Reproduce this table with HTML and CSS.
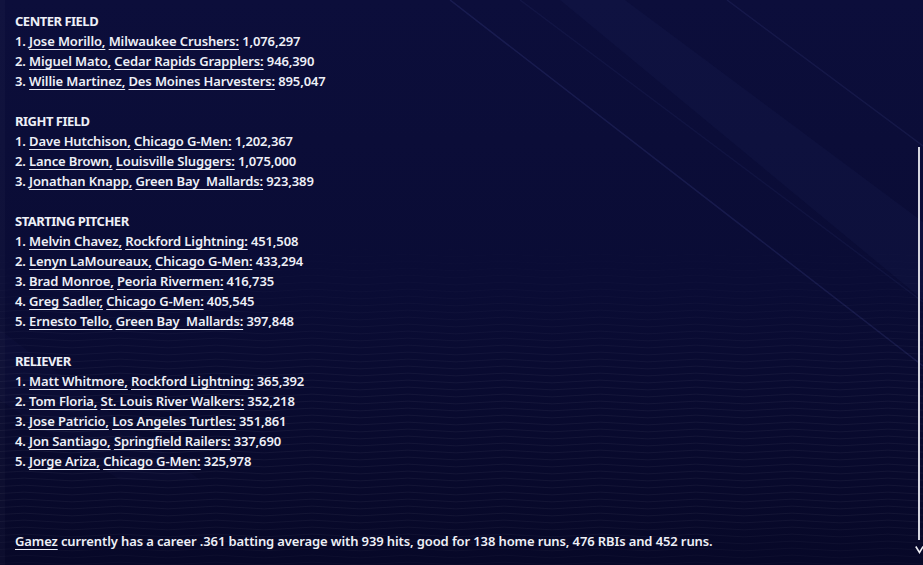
FILE: index.html
```html
<!DOCTYPE html>
<html lang="en">
<head>
<meta charset="utf-8">
<title>Awards voting</title>
<link rel="stylesheet" href="styles.css">
</head>
<body>
<div class="screen">
  <svg class="backdrop" width="923" height="565" viewBox="0 0 923 565" aria-hidden="true">
    <defs>
      <pattern id="wave" width="96" height="7" patternUnits="userSpaceOnUse">
        <path d="M0 3.5 Q24 0.8 48 3.5 T96 3.5" fill="none" stroke="#ffffff" stroke-width="1"/>
      </pattern>
      <linearGradient id="waveFade" x1="0" y1="0" x2="0" y2="1">
        <stop offset="0" stop-color="#fff" stop-opacity="0"/>
        <stop offset="0.45" stop-color="#fff" stop-opacity="1"/>
        <stop offset="0.85" stop-color="#fff" stop-opacity="1"/>
        <stop offset="1" stop-color="#fff" stop-opacity="0.4"/>
      </linearGradient>
      <mask id="waveMask">
        <rect x="0" y="235" width="923" height="330" fill="url(#waveFade)"/>
      </mask>
    </defs>
    <polygon points="560,0 625,0 923,222 923,300" fill="#8c96ff" fill-opacity="0.03"/>
    <line x1="450" y1="0" x2="923" y2="366" stroke="#8c96ff" stroke-opacity="0.11" stroke-width="1.5"/>
    <line x1="520" y1="0" x2="923" y2="302" stroke="#8c96ff" stroke-opacity="0.05" stroke-width="1.5"/>
    <line x1="727" y1="0" x2="923" y2="146" stroke="#8c96ff" stroke-opacity="0.08" stroke-width="1.5"/>
    <polygon points="0,330 0,400 120,480 200,480" fill="#8c96ff" fill-opacity="0.02"/>
    <rect x="0" y="235" width="923" height="330" fill="url(#wave)" opacity="0.045" mask="url(#waveMask)"/>
  </svg>

  <main class="content">
    <section class="group">
      <h3 class="group-title">CENTER FIELD</h3>
      <ol class="rank-list">
        <li>1. <a href="#">Jose Morillo,</a> <a href="#">Milwaukee Crushers:</a> 1,076,297</li>
        <li>2. <a href="#">Miguel Mato,</a> <a href="#">Cedar Rapids Grapplers:</a> 946,390</li>
        <li>3. <a href="#">Willie Martinez,</a> <a href="#">Des Moines Harvesters:</a> 895,047</li>
      </ol>
    </section>

    <section class="group">
      <h3 class="group-title">RIGHT FIELD</h3>
      <ol class="rank-list">
        <li>1. <a href="#">Dave Hutchison,</a> <a href="#">Chicago G-Men:</a> 1,202,367</li>
        <li>2. <a href="#">Lance Brown,</a> <a href="#">Louisville Sluggers:</a> 1,075,000</li>
        <li>3. <a href="#">Jonathan Knapp,</a> <a href="#">Green Bay&nbsp; Mallards:</a> 923,389</li>
      </ol>
    </section>

    <section class="group">
      <h3 class="group-title">STARTING PITCHER</h3>
      <ol class="rank-list">
        <li>1. <a href="#">Melvin Chavez,</a> <a href="#">Rockford Lightning:</a> 451,508</li>
        <li>2. <a href="#">Lenyn LaMoureaux,</a> <a href="#">Chicago G-Men:</a> 433,294</li>
        <li>3. <a href="#">Brad Monroe,</a> <a href="#">Peoria Rivermen:</a> 416,735</li>
        <li>4. <a href="#">Greg Sadler,</a> <a href="#">Chicago G-Men:</a> 405,545</li>
        <li>5. <a href="#">Ernesto Tello,</a> <a href="#">Green Bay&nbsp; Mallards:</a> 397,848</li>
      </ol>
    </section>

    <section class="group group-last">
      <h3 class="group-title">RELIEVER</h3>
      <ol class="rank-list">
        <li>1. <a href="#">Matt Whitmore,</a> <a href="#">Rockford Lightning:</a> 365,392</li>
        <li>2. <a href="#">Tom Floria,</a> <a href="#">St. Louis River Walkers:</a> 352,218</li>
        <li>3. <a href="#">Jose Patricio,</a> <a href="#">Los Angeles Turtles:</a> 351,861</li>
        <li>4. <a href="#">Jon Santiago,</a> <a href="#">Springfield Railers:</a> 337,690</li>
        <li>5. <a href="#">Jorge Ariza,</a> <a href="#">Chicago G-Men:</a> 325,978</li>
      </ol>
    </section>

    <p class="summary"><a href="#">Gamez</a> currently has a career .361 batting average with 939 hits, good for 138 home runs, 476 RBIs and 452 runs.</p>
  </main>

  <div class="scrollbar" aria-hidden="true">
    <div class="scroll-track"></div>
    <svg class="scroll-arrow" width="9" height="9" viewBox="0 0 9 9">
      <polyline points="0.8,1.5 4.5,7.5 8.2,1.5" fill="none" stroke="#eeeef4" stroke-width="1.6"/>
    </svg>
  </div>
</div>
</body>
</html>
```
FILE: styles.css
```css
html, body {
  margin: 0;
  padding: 0;
  height: 100%;
  overflow: hidden;
  background: #0a0c35;
}

.screen {
  position: relative;
  width: 923px;
  height: 565px;
  overflow: hidden;
  background: linear-gradient(180deg, #0c0e3b 0%, #0a0c35 50%, #070828 100%);
  box-shadow: inset 5px 0 0 rgba(255,255,255,0.025);
}

.backdrop {
  position: absolute;
  left: 0;
  top: 0;
  display: block;
}

.content {
  position: relative;
  padding: 11px 0 0 15px;
  font-family: "Noto Sans", "Open Sans", sans-serif;
  font-weight: 600;
  font-size: 13px;
  letter-spacing: -0.12px;
  line-height: 20px;
  color: #eef0f7;
}

.group {
  margin-bottom: 20px;
}

.group-last {
  margin-bottom: 60px;
}

.group-title {
  margin: 0;
  font-size: 13px;
  font-weight: 700;
  letter-spacing: -0.5px;
  line-height: 20px;
}

.rank-list {
  list-style: none;
  margin: 0;
  padding: 0;
}

.rank-list li {
  white-space: nowrap;
}

.content a {
  color: inherit;
  text-decoration: underline;
  text-decoration-thickness: 1px;
  text-underline-offset: 3px;
}

.summary {
  margin: 0;
  white-space: nowrap;
}

.scrollbar {
  position: absolute;
  top: 147px;
  right: -1px;
  width: 9px;
  height: 410px;
  display: flex;
  flex-direction: column;
  align-items: flex-end;
}

.scroll-track {
  width: 2px;
  height: 393px;
  margin-right: 4px;
  background: #d6d7e0;
}

.scroll-arrow {
  margin-top: 5px;
  display: block;
}
```
